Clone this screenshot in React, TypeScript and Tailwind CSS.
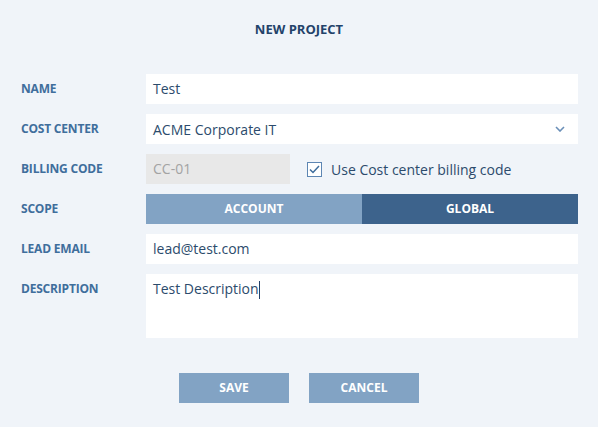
import { useState } from 'react'

function Label({ children }: { children: React.ReactNode }) {
  return (
    <div className="w-[125px] shrink-0 text-[12px] font-bold tracking-[-0.2px] text-[#3f6e9c] leading-[30px]">
      {children}
    </div>
  )
}

export default function App() {
  const [scope, setScope] = useState<'account' | 'global'>('global')
  const [useCc, setUseCc] = useState(true)

  return (
    <div className="min-h-screen w-full bg-[#f0f4f9] font-['Open_Sans',sans-serif] text-[#2c4b6c]">
      <h1 className="pt-[20px] h-[74px] text-center text-[13px] font-bold text-[#23426a]">NEW PROJECT</h1>

      <div className="flex flex-col gap-[10px] pl-[21px] pr-[20px]">
        <div className="flex">
          <Label>NAME</Label>
          <div className="flex-1 h-[30px] bg-white px-[7px] text-[14px] leading-[30px]">Test</div>
        </div>

        <div className="flex">
          <Label>COST CENTER</Label>
          <div className="flex-1 h-[30px] bg-white pl-[7px] pr-[13px] flex items-center justify-between text-[14px]">
            <span>ACME Corporate IT</span>
            <svg width="10" height="6" viewBox="0 0 10 6" fill="none">
              <path d="M1 1l4 4 4-4" stroke="#6a8fb8" strokeWidth="1.6" />
            </svg>
          </div>
        </div>

        <div className="flex items-center">
          <Label>BILLING CODE</Label>
          <div className="w-[144px] h-[30px] bg-[#e8e8e8] px-[7px] text-[14px] leading-[30px] text-[#a3a3a3]">CC-01</div>
          <button
            className="ml-[17px] flex items-center gap-[9px] text-[14px] text-[#2c4b6c]"
            onClick={() => setUseCc(!useCc)}
          >
            <span className="w-[15px] h-[15px] border-[1.5px] border-[#5d86b3] bg-white flex items-center justify-center">
              {useCc && (
                <svg width="11" height="9" viewBox="0 0 11 9" fill="none">
                  <path d="M1 4.5l3 3L10 1" stroke="#3d6c9c" strokeWidth="1.5" />
                </svg>
              )}
            </span>
            Use Cost center billing code
          </button>
        </div>

        <div className="flex">
          <Label>SCOPE</Label>
          <div className="flex-1 h-[30px] flex text-[12px] font-bold text-white">
            <button
              className={`flex-1 ${scope === 'account' ? 'bg-[#3d638c]' : 'bg-[#82a3c4]'}`}
              onClick={() => setScope('account')}
            >
              ACCOUNT
            </button>
            <button
              className={`flex-1 ${scope === 'global' ? 'bg-[#3d638c]' : 'bg-[#82a3c4]'}`}
              onClick={() => setScope('global')}
            >
              GLOBAL
            </button>
          </div>
        </div>

        <div className="flex">
          <Label>LEAD EMAIL</Label>
          <div className="flex-1 h-[30px] bg-white px-[7px] text-[14px] leading-[30px]">lead@test.com</div>
        </div>

        <div className="flex">
          <Label>DESCRIPTION</Label>
          <div className="flex-1 h-[64px] bg-white px-[7px] text-[14px] leading-[30px]">
            Test Description<span className="inline-block w-px h-[18px] bg-[#23426a] align-middle"></span>
          </div>
        </div>
      </div>

      <div className="flex justify-center gap-[20px] mt-[35px]">
        <button className="w-[110px] h-[30px] bg-[#82a3c4] text-white text-[12px] font-bold">SAVE</button>
        <button className="w-[110px] h-[30px] bg-[#82a3c4] text-white text-[12px] font-bold">CANCEL</button>
      </div>
    </div>
  )
}
